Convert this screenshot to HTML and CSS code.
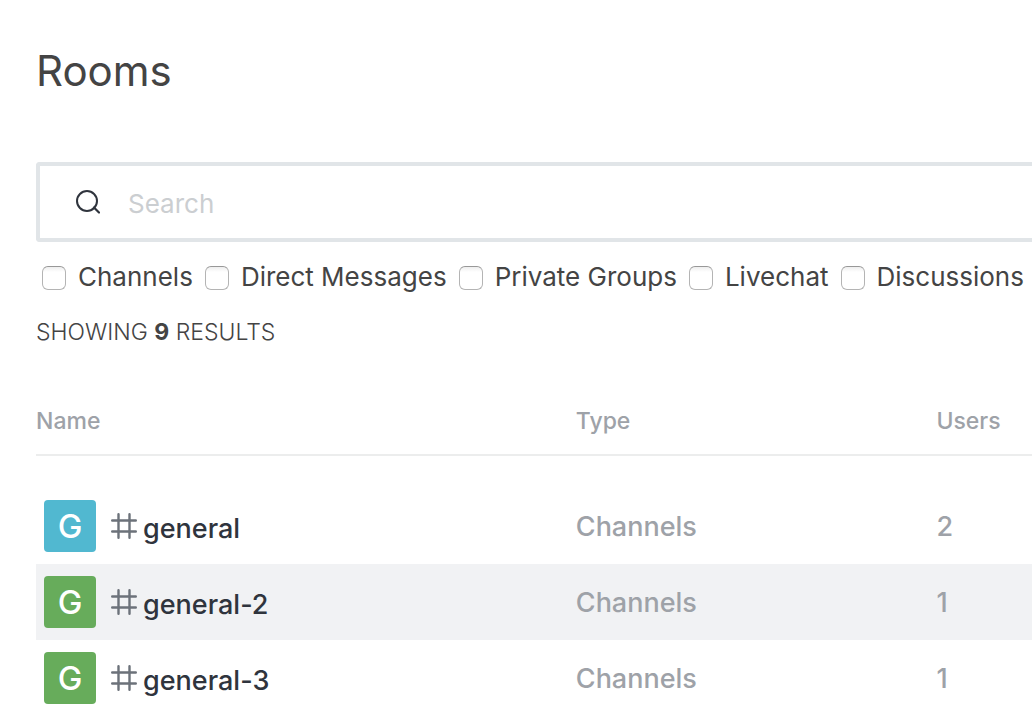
FILE: index.html
```html
<!DOCTYPE html>
<html lang="en">
<head>
<meta charset="utf-8">
<meta name="viewport" content="width=device-width, initial-scale=1">
<title>Rooms</title>
<link rel="stylesheet" href="styles.css">
</head>
<body>
<svg class="sprite" aria-hidden="true">
  <symbol id="icon-hash" viewBox="0 0 26 26">
    <path d="M7.5 1.2v23.6M18.5 1.2v23.6M1.2 7.5h23.6M1.2 18.5h23.6" fill="none" stroke="currentColor" stroke-width="2.4" stroke-linecap="round"/>
  </symbol>
</svg>
<main class="page">
  <h1 class="title">Rooms</h1>
  <label class="search">
    <svg class="search-icon" viewBox="0 0 24 24" aria-hidden="true">
      <circle cx="11" cy="11" r="10" fill="none" stroke="currentColor" stroke-width="2"/>
      <path d="M18 17.5l5 5" fill="none" stroke="currentColor" stroke-width="2.2" stroke-linecap="round"/>
    </svg>
    <input class="search-input" type="text" placeholder="Search" aria-label="Search">
  </label>
  <form class="filters">
    <label class="filter"><input class="check" type="checkbox">Channels</label>
    <label class="filter"><input class="check" type="checkbox">Direct Messages</label>
    <label class="filter"><input class="check" type="checkbox">Private Groups</label>
    <label class="filter"><input class="check" type="checkbox">Livechat</label>
    <label class="filter"><input class="check" type="checkbox">Discussions</label>
  </form>
  <p class="results">SHOWING <b>9</b> RESULTS</p>
  <table class="rooms">
    <thead>
      <tr><th class="col-name">Name</th><th class="col-type">Type</th><th>Users</th></tr>
    </thead>
    <tbody>
      <tr>
        <td><div class="room"><span class="avatar avatar-blue">G</span><svg class="hash" aria-hidden="true"><use href="#icon-hash"/></svg><span class="room-name">general</span></div></td>
        <td>Channels</td><td>2</td>
      </tr>
      <tr class="active">
        <td><div class="room"><span class="avatar">G</span><svg class="hash" aria-hidden="true"><use href="#icon-hash"/></svg><span class="room-name">general-2</span></div></td>
        <td>Channels</td><td>1</td>
      </tr>
      <tr>
        <td><div class="room"><span class="avatar">G</span><svg class="hash" aria-hidden="true"><use href="#icon-hash"/></svg><span class="room-name">general-3</span></div></td>
        <td>Channels</td><td>1</td>
      </tr>
    </tbody>
  </table>
</main>
</body>
</html>
```
FILE: styles.css
```css
* { box-sizing: border-box; }
body {
  margin: 0;
  background: #fff;
  color: #444;
  font-family: Inter, "Liberation Sans", sans-serif;
}
.sprite { display: none; }
.page { padding: 43px 0 0 36px; }
.title {
  margin: 0 0 63px;
  font-size: 42px;
  line-height: 56px;
  font-weight: 400;
}
.search {
  display: flex;
  align-items: center;
  gap: 28px;
  height: 80px;
  padding-left: 36px;
  border: 4px solid #e1e5e8;
  border-right: 0;
  border-radius: 4px 0 0 4px;
}
.search-icon { flex: none; width: 24px; height: 24px; color: #2f343d; }
.search-input {
  flex: 1;
  min-width: 0;
  padding: 4px 0 0;
  border: 0;
  outline: 0;
  background: none;
  color: #2f343d;
  font: 400 26px/38px Inter, "Liberation Sans", sans-serif;
}
.search-input::placeholder { color: #cbced1; opacity: 1; }
.filters {
  display: flex;
  gap: 12px;
  padding: 16px 0 0 6px;
}
.filter {
  display: flex;
  align-items: center;
  gap: 12px;
  font-size: 26px;
  line-height: 38px;
  white-space: nowrap;
}
.check {
  appearance: none;
  flex: none;
  width: 24px;
  height: 24px;
  margin: 2px 0 0;
  border: 1px solid #b4b4b4;
  border-top-color: #989898;
  border-radius: 6px;
  background: linear-gradient(#eee, #fff 5px);
}
.check:checked { background: #1d74f5; }
.results {
  margin: 20px 0 0;
  font-size: 23px;
  line-height: 32px;
  font-weight: 300;
}
.results b { font-weight: 700; }
.rooms {
  width: 100%;
  margin-top: 40px;
  table-layout: fixed;
  border-spacing: 0;
  color: #9ea2a8;
  text-align: left;
}
.rooms th {
  height: 68px;
  padding: 0;
  border-bottom: 2px solid #eceded;
  font-size: 23px;
  font-weight: 500;
}
.col-name { width: 54.2%; }
.col-type { width: 36.2%; }
.rooms tbody::before { content: ""; display: table-row; height: 32px; }
.rooms td { height: 76px; padding: 0; font-size: 27px; font-weight: 500; }
.active { background: #f1f2f4; }
.room { display: flex; align-items: center; padding-left: 8px; }
.avatar {
  width: 52px;
  height: 52px;
  border-radius: 4px;
  background: #67ac5b;
  color: #fff;
  font-size: 33px;
  line-height: 52px;
  text-align: center;
}
.avatar-blue { background: #51b8d0; }
.hash { width: 26px; height: 26px; margin: 0 6px 0 15px; color: #6c727a; }
.room-name { padding-top: 4px; color: #2f343d; }
```
